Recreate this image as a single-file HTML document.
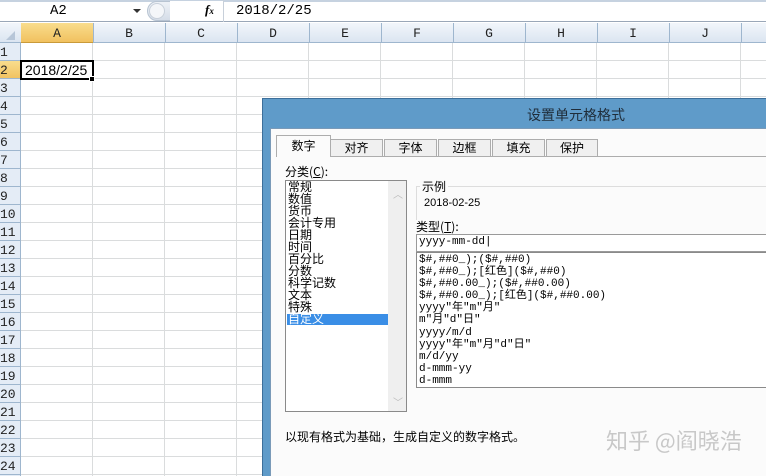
<!DOCTYPE html>
<html><head><meta charset="utf-8">
<style>
*{margin:0;padding:0;box-sizing:border-box}
body{width:766px;height:476px;overflow:hidden;background:#fff;position:relative;font-family:"Liberation Sans","Noto Sans CJK SC",sans-serif;font-size:12px;color:#000}
.a{position:absolute}
.mono{font-family:"Liberation Mono","Noto Sans CJK SC",monospace}
.cj{font-family:"Noto Sans CJK SC","WenQuanYi Zen Hei",sans-serif}
</style></head><body>
<!-- formula bar -->
<div class="a" style="left:0;top:0;width:766px;height:22px;background:#fff;border-bottom:1px solid #9aa7b8"></div>
<div class="a" style="left:0;top:0;width:766px;height:2px;background:#c6d2e0"></div>
<div class="a mono" style="left:50px;top:3px;font-size:14px">A2</div>
<div class="a" style="left:133px;top:9px;width:0;height:0;border-left:4px solid transparent;border-right:4px solid transparent;border-top:4px solid #333"></div>
<div class="a" style="left:147px;top:1px;width:40px;height:20px;border-radius:10px;background:linear-gradient(#eef2f7,#d5dde8);border:1px solid #b8c4d2"></div>
<div class="a" style="left:149px;top:3px;width:16px;height:16px;border-radius:8px;background:#f4f6f9;border:1px solid #c8d0da"></div>
<div class="a" style="left:170px;top:1px;width:54px;height:20px;background:#fff"></div>
<div class="a" style="left:205px;top:2px;font-family:'Liberation Serif',serif;font-style:italic;font-weight:bold;font-size:13px">f<span style="font-size:9px">x</span></div>
<div class="a" style="left:223px;top:0;width:1px;height:22px;background:#c8d0da"></div>
<div class="a mono" style="left:236px;top:3px;font-size:14px">2018/2/25</div>
<!-- column headers -->
<div class="a" style="left:0;top:23px;width:766px;height:20px;background:linear-gradient(#f2f6fb,#dbe5f1);border-bottom:1px solid #9eb6ce"></div>
<div class="a" style="left:21px;top:23px;width:72px;height:20px;background:linear-gradient(#f9dd8d,#f1c15f);border-bottom:1px solid #c99a3a"></div>
<div class="a" style="left:6px;top:31px;width:0;height:0;border-left:9px solid transparent;border-bottom:9px solid #b7c6d8"></div>
<div id="cols"></div>
<!-- row headers -->
<div class="a" style="left:0;top:43px;width:21px;height:433px;background:#e4ecf6;border-right:1px solid #9eb6ce"></div>
<div class="a" style="left:0;top:61px;width:21px;height:18px;background:linear-gradient(#f9dd8d,#f1c15f)"></div>
<div id="grid"></div>
<!-- selected cell -->
<div class="a" style="left:20px;top:60px;width:74px;height:20px;border:2px solid #000"></div>
<div class="a" style="left:89px;top:76px;width:6px;height:6px;background:#000;border:1px solid #fff"></div>
<div class="a" style="left:25px;top:62px;font-size:14px">2018/2/25</div>
<!-- dialog -->
<div class="a" style="left:262px;top:98px;width:504px;height:378px;background:#5f9bc9;border:1px solid #3d6f9a;border-right:none;border-bottom:none"></div>
<div class="a cj" style="left:527px;top:105px;font-size:14px;color:#1f2d3a">设置单元格格式</div>
<div class="a" style="left:270px;top:128px;width:496px;height:348px;background:#fbfbfb;border-left:1px solid #7a9ab8;border-top:1px solid #7a9ab8"></div>
<!-- tabs -->
<div class="a" style="left:276px;top:156px;width:490px;height:1px;background:#adadad"></div>
<div class="a cj" style="left:330px;top:139px;width:53px;height:18px;background:#f0f0f0;border:1px solid #adadad;text-align:center;font-size:12px;line-height:16px">对齐</div>
<div class="a cj" style="left:384px;top:139px;width:53px;height:18px;background:#f0f0f0;border:1px solid #adadad;text-align:center;font-size:12px;line-height:16px">字体</div>
<div class="a cj" style="left:438px;top:139px;width:53px;height:18px;background:#f0f0f0;border:1px solid #adadad;text-align:center;font-size:12px;line-height:16px">边框</div>
<div class="a cj" style="left:492px;top:139px;width:53px;height:18px;background:#f0f0f0;border:1px solid #adadad;text-align:center;font-size:12px;line-height:16px">填充</div>
<div class="a cj" style="left:546px;top:139px;width:52px;height:18px;background:#f0f0f0;border:1px solid #adadad;text-align:center;font-size:12px;line-height:16px">保护</div>
<div class="a cj" style="left:276px;top:135px;width:55px;height:22px;background:#fbfbfb;border:1px solid #adadad;border-bottom:none;text-align:center;font-size:12px;line-height:20px">数字</div>
<div class="a cj" style="left:285px;top:163px;font-size:12px">分类(<u>C</u>):</div>
<!-- category list -->
<div class="a" style="left:285px;top:180px;width:122px;height:232px;background:#fff;border:1px solid #8a8a8a"></div>
<div class="a" style="left:388px;top:181px;width:18px;height:230px;background:#efefef"></div>
<div class="a" style="left:393px;top:186px;color:#bbb;font-size:10px">︿</div>
<div class="a" style="left:393px;top:394px;color:#bbb;font-size:10px">﹀</div>
<div class="a" style="left:287px;top:314px;width:101px;height:11px;background:#3a8ee6"></div>
<div class="a cj" style="left:288px;top:181px;font-size:12px;line-height:12px">常规<br>数值<br>货币<br>会计专用<br>日期<br>时间<br>百分比<br>分数<br>科学记数<br>文本<br>特殊<br><span style="color:#fff">自定义</span></div>
<!-- sample -->
<div class="a" style="left:416px;top:186px;width:350px;height:34px;border-top:1px solid #ddd;border-left:1px solid #ddd"></div>
<div class="a cj" style="left:420px;top:178px;background:#fbfbfb;padding:0 2px;font-size:12px">示例</div>
<div class="a" style="left:424px;top:197px;font-size:11px">2018-02-25</div>
<div class="a cj" style="left:416px;top:218px;font-size:12px">类型(<u>T</u>):</div>
<div class="a" style="left:416px;top:234px;width:350px;height:18px;background:#fff;border:1px solid #9a9a9a;border-right:none"></div>
<div class="a mono" style="left:419px;top:236px;font-size:11px">yyyy-mm-dd|</div>
<div class="a" style="left:416px;top:252px;width:350px;height:136px;background:#fff;border:1px solid #8a8a8a;border-right:none"></div>
<div class="a mono" style="left:419px;top:254px;font-size:11px;line-height:12.1px;white-space:pre">$#,##0_);($#,##0)
$#,##0_);[红色]($#,##0)
$#,##0.00_);($#,##0.00)
$#,##0.00_);[红色]($#,##0.00)
yyyy"年"m"月"
m"月"d"日"
yyyy/m/d
yyyy"年"m"月"d"日"
m/d/yy
d-mmm-yy
d-mmm</div>
<div class="a cj" style="left:285px;top:428px;font-size:12px">以现有格式为基础，生成自定义的数字格式。</div>
<div class="a cj" style="left:606px;top:424px;font-size:22px;color:#c8c8c8">知乎 @阎晓浩</div>
<script>
var c=document.getElementById('cols'),h='',L='ABCDEFGHIJ';
for(var i=0;i<10;i++){var x=21+72*i;h+='<div class="a mono" style="left:'+x+'px;top:26px;width:72px;text-align:center;font-size:13px;color:#222">'+L[i]+'</div><div class="a" style="left:'+(x+72)+'px;top:23px;width:1px;height:20px;background:#9eb6ce"></div>';}
c.innerHTML=h;
var g=document.getElementById('grid');h='';
for(var r=1;r<=24;r++){var y=43+18*(r-1);h+='<div class="a mono" style="left:0;top:'+(y+2)+'px;font-size:13px;color:#222">'+r+'</div><div class="a" style="left:0;top:'+(y+17)+'px;width:21px;height:1px;background:#9eb6ce"></div><div class="a" style="left:21px;top:'+(y+17)+'px;width:745px;height:1px;background:#dadcdd"></div>';}
for(var i=1;i<=10;i++){h+='<div class="a" style="left:'+(20+72*i)+'px;top:43px;width:1px;height:433px;background:#dadcdd"></div>';}
g.innerHTML=h;
</script>
</body></html>
